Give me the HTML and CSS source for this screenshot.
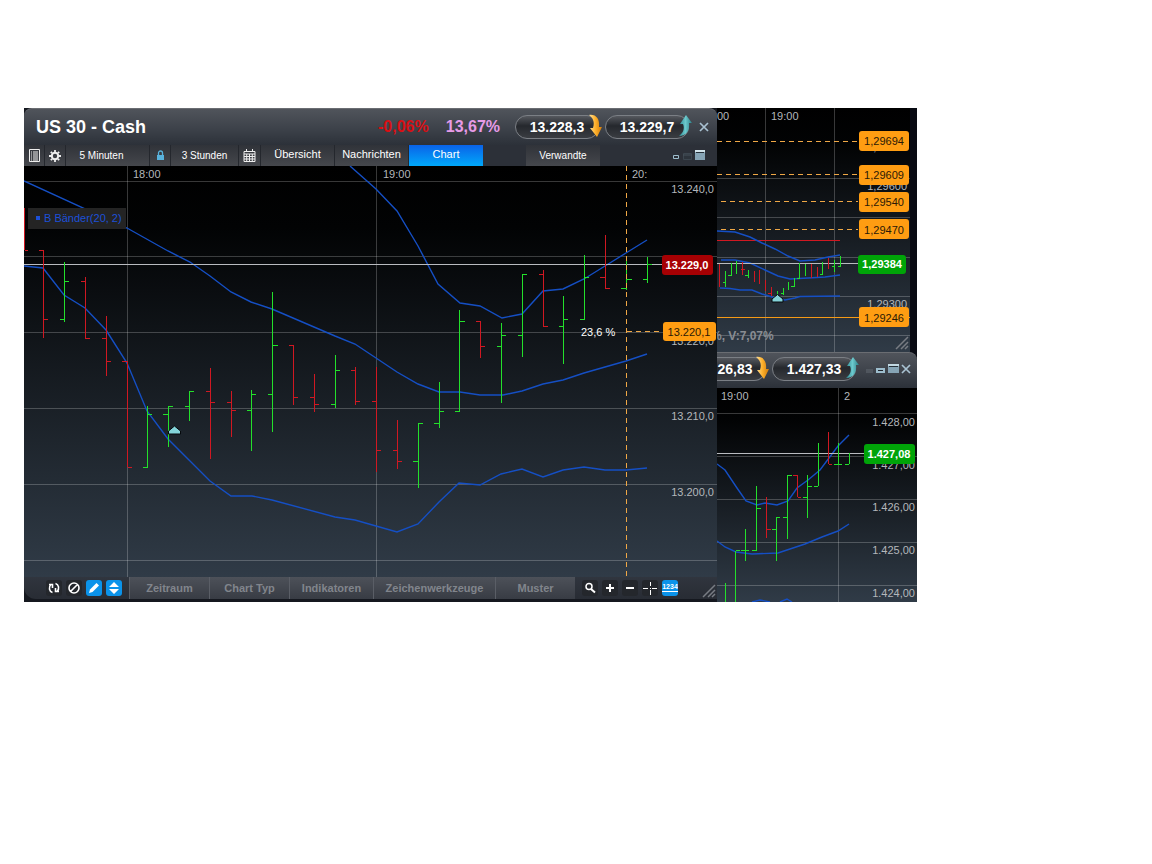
FILE: index.html
```html
<!DOCTYPE html>
<html lang="de">
<head>
<meta charset="utf-8">
<title>US 30 - Cash</title>
<link rel="stylesheet" href="styles.css">
</head>
<body>
<svg class="defs" width="0" height="0" aria-hidden="true">
  <defs>
    <linearGradient id="bg" x1="0" y1="0" x2="0" y2="1"><stop offset="0" stop-color="#000"/><stop offset=".15" stop-color="#020304"/><stop offset="1" stop-color="#303b47"/></linearGradient>
    <linearGradient id="gold" x1="0" y1="0" x2="1" y2="0"><stop offset="0" stop-color="#ffe29a"/><stop offset=".5" stop-color="#fdb02c"/><stop offset="1" stop-color="#d07a08"/></linearGradient>
    <linearGradient id="teal" x1="0" y1="0" x2="1" y2="0"><stop offset="0" stop-color="#2e8a92"/><stop offset=".5" stop-color="#6cc9cd"/><stop offset="1" stop-color="#2b7f88"/></linearGradient>
    <symbol id="down" viewBox="0 0 14 24"><path d="M1 1C8 0 12 5 11 13H14L9 23L2 14H5C7 8 5 4 1 1Z" fill="url(#gold)"/></symbol>
    <symbol id="up" viewBox="0 0 14 24"><path d="M1 22C8 22 12 17 11 9H14L8 1L2 10H5C7 15 5 19 1 22Z" fill="url(#teal)"/></symbol>
    <symbol id="close" viewBox="0 0 10 10"><path d="M1 1L9 9M9 1L1 9" stroke="#a9c2d2" stroke-width="1.7" fill="none"/></symbol>
    <symbol id="grip" viewBox="0 0 14 14"><path d="M1 13L13 1M6 13L13 6M10 13L13 10" stroke="#787c83" stroke-width="1.5" fill="none"/></symbol>
  </defs>
</svg>

<main class="workspace">
  <section class="window window-fx" aria-label="EUR/USD">
    <svg class="chart" viewBox="717 108 193 244">
      <rect x="717" y="108" width="193" height="244" fill="url(#bg)"/>
      <path class="grid" d="M717 178.5H910M717 217.5H910M717 257.5H910M717 296.5H910M717 335.5H910M765.5 108V352M834.5 108V352"/>
      <path class="level" d="M717 141.5H858M717 174.5H858M721 201.5H858M721 229.5H858"/>
      <path class="orange" d="M717 317.5H910"/>
      <path class="loss" d="M717 240.5H840"/>
      <path class="band" d="M717 231L735 232L750 237L762 243L775 249L788 256L800 261L815 260L828 257L840 255M721 260H735L750 263L765 270L778 276L790 279L808 278L825 277L840 275M720 288L730 288.500L740 290H752L762 294L772 297L785 300L795 298L800 296.500L840 296"/>
      <path class="price" d="M717 263.5H858"/>
      <path class="loss" d="M719.5 264V287M742.5 262V275M741 269.5h4M754.5 271V282M759.5 270V284M765.5 280V291M771.5 287V296M768 293.500h3M811.5 264V278M817.5 267V277M828.5 258V269"/>
      <path class="gain" d="M725.5 271V287M723 282.500h2M731.5 263V276M728 275.500h3M736.5 261V274M748.5 270V278M745 275.500h3M777.5 291V297M783.5 288V295M781 293.500h2M788.5 282V290M794.5 278V287M791 286.500h3M799.5 263V279M797 278.500h2M805.5 264V276M822.5 262V275M820 274.500h2M834.5 260V272M832 266.500h2M840.5 256V267M838 266.500h2"/>
      <path class="marker" d="M772 302V299L777.500 294.500L783 299V302Z"/>
      <g class="axis">
        <text x="717" y="120">00</text><text x="771" y="120">19:00</text>
        <text x="907" y="151" text-anchor="end">1,29700</text><text x="907" y="190" text-anchor="end">1,29600</text><text x="907" y="308" text-anchor="end">1,29300</text>
      </g>
      <text class="info" x="711" y="340">%, V:7,07%</text>
      <g class="tag">
        <rect x="859" y="131" width="50" height="20" rx="3"/><text x="884" y="145">1,29694</text>
        <rect x="859" y="165" width="50" height="20" rx="3"/><text x="884" y="179">1,29609</text>
        <rect x="859" y="192" width="50" height="20" rx="3"/><text x="884" y="206">1,29540</text>
        <rect x="859" y="219" width="50" height="20" rx="3"/><text x="884" y="234">1,29470</text>
        <rect x="859" y="307" width="50" height="20" rx="3"/><text x="884" y="322">1,29246</text>
      </g>
      <g class="tag tag-gain"><rect x="858" y="255" width="48" height="19" rx="3"/><text x="882" y="268">1,29384</text></g>
      <use href="#grip" x="895" y="336" width="14" height="14"/>
    </svg>
  </section>

  <section class="window window-gold" aria-label="Gold">
    <header class="titlebar titlebar-gold">
      <button class="quote quote-cut">26,83<svg class="arrow"><use href="#down"/></svg></button>
      <button class="quote">1.427,33<svg class="arrow"><use href="#up"/></svg></button>
      <button class="icon-button controls" aria-label="Fenstergröße"><svg width="33" height="12" viewBox="0 0 33 12"><path d="M0 6h7v4H0z" fill="#50565e"/><path d="M10 5h9v5h-9z" fill="#9dbdcd"/><path d="M12 7h5v1h-5z" fill="#20252b"/><path d="M22 1h11v9H22z" fill="#86a4b5"/><path d="M22 1h11v2H22z" fill="#c2d8e2"/><path d="M23 3h9v1h-9z" fill="#253039"/></svg></button>
      <button class="icon-button" aria-label="Schließen"><svg width="10" height="10"><use href="#close"/></svg></button>
    </header>
    <svg class="chart" viewBox="717 388 200 214">
      <rect x="717" y="388" width="200" height="214" fill="url(#bg)"/>
      <path class="grid" d="M717 413.5H917M717 456.5H917M717 499.5H917M717 542.5H917M717 585.5H917M838.5 388V602"/>
      <path class="band" d="M717 464L725 470L737 488L746 501L757 505L765 503L777 505L788 501L797 488L808 480L820 470L829 458L838 446L849 435M717 541L725 547L736 552L752 554L778 553L790 549L805 544L822 537L838 531L849 524M752 602L760 600L770 602M780 602L787 599L792 602"/>
      <path class="price" d="M717 453.5H864"/>
      <path class="loss" d="M766.5 497V538M767 529.5h4M797.5 475V497M793 475.5h4M798 497.5h3M828.5 432V464M829 464.5h3"/>
      <path class="gain" d="M725.5 583V602M735.5 551V602M736 550.5h4M745.5 529V561M741 550.5h8M756.5 486V551M752 550.5h4M757 508.5h4M776.5 517V561M772 529.5h4M777 517.5h3M787.5 475V539M783 517.5h4M788 475.5h4M807.5 475V518M803 497.5h4M808 486.5h4M818.5 443V486M814 486.5h4M838.5 443V464M834 464.5h8M849.5 453V464M845 464.5h4"/>
      <g class="axis">
        <text x="721" y="400">19:00</text><text x="844" y="400">2</text>
        <g text-anchor="end"><text x="915" y="426">1.428,00</text><text x="915" y="469">1.427,00</text><text x="915" y="511">1.426,00</text><text x="915" y="554">1.425,00</text><text x="915" y="597">1.424,00</text></g>
      </g>
      <g class="tag tag-gain"><rect x="864" y="444" width="51" height="20" rx="3"/><text x="889" y="458">1.427,08</text></g>
    </svg>
  </section>

  <section class="window window-us30" aria-label="US 30 - Cash">
    <header class="titlebar">
      <h1 class="title">US 30 - Cash</h1>
      <span class="change">-0,06%</span>
      <span class="margin">13,67%</span>
      <button class="quote">13.228,3<svg class="arrow"><use href="#down"/></svg></button>
      <button class="quote">13.229,7<svg class="arrow"><use href="#up"/></svg></button>
      <button class="icon-button" aria-label="Schließen"><svg width="10" height="10"><use href="#close"/></svg></button>
    </header>

    <nav class="toolbar">
      <button class="tool" aria-label="Liste"><svg width="11" height="13" viewBox="0 0 11 13"><path d="M.5.500h10v12H.5z" fill="none" stroke="#eee"/><path d="M2 3h1M4 3h5M2 5h1M4 5h5M2 7h1M4 7h5M2 9h1M4 9h5M2 11h1M4 11h5" stroke="#eee"/></svg></button>
      <button class="tool" aria-label="Einstellungen"><svg width="12" height="12" viewBox="0 0 12 12"><circle cx="6" cy="6" r="3.200" fill="none" stroke="#eee" stroke-width="2"/><path d="M6 0v2M6 10v2M0 6h2M10 6h2M1.800 1.800l1.400 1.400M8.800 8.800l1.400 1.400M10.200 1.800L8.800 3.200M3.200 8.800l-1.400 1.400" stroke="#eee" stroke-width="1.800"/></svg></button>
      <button class="tool tool-interval">5 Minuten</button>
      <button class="tool" aria-label="Sperren"><svg width="9" height="11" viewBox="0 0 9 11"><path d="M2.500 5V3a2 2 0 0 1 4 0v2" fill="none" stroke="#58b2dc" stroke-width="1.300"/><path d="M1 5h7v5H1z" fill="#58b2dc"/></svg></button>
      <button class="tool tool-range">3 Stunden</button>
      <button class="tool tool-calendar" aria-label="Kalender"><svg width="13" height="13" viewBox="0 0 13 13"><path d="M1 2.500h11v10H1zM1 5h11M1 7.500h11M1 10h11M3.700 5v7M6.500 5v7M9.300 5v7M3.500 0v3M9.500 0v3" fill="none" stroke="#eee"/></svg></button>
      <button class="tool tab">Übersicht</button>
      <button class="tool tab">Nachrichten</button>
      <button class="tool tab tab-active">Chart</button>
      <button class="tool related">Verwandte</button>
      <button class="sizes" aria-label="Fenstergröße"><svg width="33" height="12" viewBox="0 0 33 12"><path d="M1.500 5.500h5v3h-5z" fill="none" stroke="#9dbdcd"/><path d="M11.500 3.500h8v6h-8z" fill="#2d343c" stroke="#3c464f"/><path d="M11 5h9" stroke="#46515b"/><path d="M23 1h10v9H23z" fill="#86a4b5"/><path d="M23 0h10v2H23z" fill="#d2e3ea"/><path d="M24 2h8v1h-8z" fill="#253039"/></svg></button>
    </nav>

    <svg class="chart" viewBox="24 166 693 411">
      <rect x="24" y="166" width="693" height="411" fill="url(#bg)"/>
      <path class="grid" d="M24 181.5H717M24 256.5H717M24 332.5H717M24 408.5H717M24 484.5H717M24 560.5H717M127.5 166V577M376.5 166V577"/>
      <path class="band" d="M24 181L127 228L168 251L190 262L210 276L231 292L251 302L272 309L314 327L335 336L355 344L376 358L397 372L418 384L439 392L460 392L480 395L503 395L522 391L543 384L563 380L584 373L605 367L626 361L647 354M24 266L43 268L64 295L85 308L106 330L127 363L147 411L168 439L210 481L231 496H252L272 500L335 517L355 520L376 526L397 532L418 524L439 502L459 483L480 485L501 474L522 469L543 477L563 470L584 467L605 470H626L647 468M350 166L376 189L397 211L418 246L438 284L460 303L480 306L502 318L522 314L543 291L563 289L584 279L605 266L626 253L647 240"/>
      <path class="price" d="M24 264.5H662"/>
      <path class="loss" d="M24.500 208V250M25 250.5h3M43.5 250V338M39 250.5h4M44 319.5h4M85.5 277V339M81 281.5h4M86 338.5h4M106.5 316V376M102 338.5h4M107 361.5h4M127.5 361V467M122 361.5h5M128 467.5h4M210.5 368V459M206 391.5h4M211 402.5h4M231.5 391V437M227 402.5h4M232 410.5h4M293.5 345V405M289 345.5h4M294 397.5h4M314.5 374V412M310 397.5h4M315 404.5h4M355.5 367V405M351 370.5h4M356 401.5h4M376.5 367V472M372 401.5h4M377 450.5h4M397.5 420V469M393 450.5h4M398 461.5h4M480.5 321V358M476 321.5h4M481 346.5h4M543.5 270V327M539 274.5h4M544 326.5h4M605.5 235V289M600 277.5h5M606 288.5h4"/>
      <path class="gain" d="M64.5 262V322M60 319.5h4M65 281.5h4M147.5 406V467M143 467.5h5M148 414.5h4M168.5 406V447M163 414.5h5M169 406.5h4M189.5 391V421M185 406.5h4M190 391.5h4M251.5 390V451M247 410.5h4M252 394.5h4M272.5 292V432M268 394.5h4M273 345.5h5M335.5 355V408M331 404.5h4M336 370.5h4M418.5 423V488M413 461.5h5M419 423.5h4M439.5 382V428M434 423.5h5M440 411.5h4M459.5 310V412M455 411.5h4M460 321.5h5M501.5 323V403M497 346.5h4M502 335.5h4M522.5 274V357M518 335.5h4M523 274.5h4M563.5 296V364M559 326.5h4M564 319.5h4M584.5 255V320M580 319.5h4M585 277.5h4M626.5 256V290M621 288.5h5M627 279.5h5M647.5 257V283M643 279.5h4M648 264.5h4"/>
      <path class="level" d="M626.5 166V577M627 331.5H662"/>
      <path class="marker" d="M168.500 434V431L174.500 426L180.500 431V434Z"/>
      <g class="axis">
        <text x="133" y="178">18:00</text><text x="383" y="178">19:00</text><text x="632" y="178">20:</text>
        <g text-anchor="end"><text x="714" y="193">13.240,0</text><text x="714" y="345">13.220,0</text><text x="714" y="420">13.210,0</text><text x="714" y="496">13.200,0</text></g>
        <text class="ratio" x="581" y="336">23,6 %</text>
      </g>
      <rect x="28" y="208" width="98" height="21" fill="#242424"/><rect x="36" y="216" width="4" height="4" fill="#1c50d8"/>
      <text class="legend" x="44" y="222">B Bänder(20, 2)</text>
      <g class="tag"><rect x="663" y="322" width="53" height="19" rx="3"/><text x="689" y="336">13.220,1</text></g>
      <g class="tag tag-loss"><rect x="662" y="255" width="51" height="20" rx="3"/><text x="687" y="269">13.229,0</text></g>
    </svg>

    <footer class="footer">
      <div class="footer-tools">
        <button class="mini" aria-label="Aktualisieren"><svg viewBox="0 0 16 16"><path d="M6.500 12.500A4 4.500 0 0 1 5 4.500M9.500 3.500A4 4.500 0 0 1 11 11.500M3 4.500h3.500V8M13 11.500H9.500V8" fill="none" stroke="#fff" stroke-width="1.600"/></svg></button>
        <button class="mini" aria-label="Zurücksetzen"><svg viewBox="0 0 16 16"><path d="M4.500 11.500L11.500 4.500M13 8A5 5 0 1 1 3 8A5 5 0 1 1 13 8" fill="none" stroke="#fff" stroke-width="1.600"/></svg></button>
        <button class="mini mini-on" aria-label="Zeichnen"><svg viewBox="0 0 16 16"><path d="M3 13L4 9.500L10.500 3L13 5.500L6.500 12Z" fill="#fff"/></svg></button>
        <button class="mini mini-on" aria-label="Skalieren"><svg viewBox="0 0 16 16"><path d="M3 7L8 2L13 7ZM3 9H13L8 14Z" fill="#fff"/></svg></button>
      </div>
      <div class="footer-tabs">
        <button class="footer-tab">Zeitraum</button><button class="footer-tab">Chart Typ</button><button class="footer-tab footer-tab-medium">Indikatoren</button><button class="footer-tab footer-tab-wide">Zeichenwerkzeuge</button><button class="footer-tab">Muster</button>
      </div>
      <div class="footer-zoom">
        <button class="mini" aria-label="Lupe"><svg viewBox="0 0 16 16"><circle cx="7" cy="6.500" r="3" fill="none" stroke="#fff" stroke-width="1.500"/><path d="M9 9L13 12.500" stroke="#fff" stroke-width="2"/></svg></button>
        <button class="mini" aria-label="Vergrößern"><svg viewBox="0 0 16 16"><path d="M4 8H12M8 4V12" stroke="#fff" stroke-width="2"/></svg></button>
        <button class="mini" aria-label="Verkleinern"><svg viewBox="0 0 16 16"><path d="M4 8H12" stroke="#fff" stroke-width="2"/></svg></button>
        <button class="mini" aria-label="Fadenkreuz"><svg viewBox="0 0 16 16"><path d="M1 8.500H6M10 8.500H15M8.500 2V6M8.500 10V15M8 8.500h1" stroke="#fff"/></svg></button>
        <button class="mini mini-on" aria-label="Werte anzeigen"><svg viewBox="0 0 16 16"><text class="digits" x="8" y="9">1234</text><path d="M0 11.500H16" stroke="#fff"/></svg></button>
      </div>
      <svg class="grip" width="14" height="14"><use href="#grip"/></svg>
    </footer>
  </section>
</main>
</body>
</html>
```

FILE: styles.css
```css
body {
  margin: 0;
  background: #fff;
  font-family: "Liberation Sans", Arial, sans-serif;
}

button {
  margin: 0;
  padding: 0;
  border: 0;
  background: none;
  color: inherit;
  font: inherit;
}

.defs { position: absolute; }

.workspace {
  position: relative;
  width: 893px;
  height: 494px;
  margin: 108px 0 0 24px;
  background: #080a12;
}

.window { position: absolute; }
.window-us30 { left: 0; top: 0; width: 693px; padding-bottom: 3px; background: #15181f; }
.window-fx { left: 693px; top: 0; width: 193px; }
.window-gold { left: 693px; top: 244px; width: 200px; }

.chart { display: block; width: 100%; height: auto; }

.titlebar {
  display: flex;
  align-items: center;
  box-sizing: border-box;
  height: 37px;
  padding: 0 8px 0 12px;
  border-top: 1px solid #6a6d72;
  border-radius: 8px 8px 0 0;
  background: linear-gradient(#50545b, #3b4048 60%, #2c3139);
  color: #fff;
}
.titlebar-gold { height: 36px; padding: 0 6px 3px 0; border-radius: 0 8px 0 0; }

.title { flex: 1; margin: 0; font-size: 18px; font-weight: bold; }
.change { margin-right: 17px; color: #d80f14; font-size: 16px; font-weight: bold; }
.margin { margin-right: 15px; color: #e79be8; font-size: 16px; font-weight: bold; }

.quote {
  position: relative;
  box-sizing: border-box;
  width: 84px;
  height: 24px;
  margin-right: 6px;
  border: 1px solid #7b7f85;
  border-radius: 12px;
  background: linear-gradient(#55585e, #25282d 45%, #3a3d42);
  font-size: 14px;
  font-weight: bold;
}
.quote + .quote { margin-right: 10px; }
.quote-cut {
  width: 49px;
  padding-right: 12px;
  border-left: 0;
  border-radius: 0 12px 12px 0;
}
.arrow { position: absolute; right: -4px; top: -2px; width: 14px; height: 24px; }
.icon-button { display: flex; }
.titlebar > .icon-button:last-child { margin-left: auto; }

.toolbar {
  display: flex;
  height: 21px;
  background: #2c3038;
  color: #fff;
  font-size: 10px;
}
.tool {
  display: flex;
  align-items: center;
  justify-content: center;
  box-sizing: border-box;
  width: 21px;
  border-right: 1px solid #24272d;
  background: linear-gradient(#303339, #45474c);
}
.tool-interval { width: 84px; padding-right: 12px; }
.tool-range { width: 68px; }
.tool-calendar { width: 22px; }
.tab { width: 74px; padding-bottom: 3px; font-size: 11px; }
.tab-active { border: 0; background: linear-gradient(#0a63e8, #00a8fa); }
.related { width: 74px; margin-left: 43px; border: 0; }
.sizes { display: flex; align-items: center; margin: 0 12px 0 auto; }

.grid { fill: none; stroke: #fff; stroke-opacity: .22; }
.band { fill: none; stroke: #154fc4; stroke-width: 1.4; }
.price { stroke: #b9bbc0; }
.loss { fill: none; stroke: #d01822; }
.gain { fill: none; stroke: #23e02b; }
.level { fill: none; stroke: #f0a846; stroke-dasharray: 5 4; }
.orange { stroke: #f59a16; }
.marker { fill: #84d4da; stroke: #05090c; }

.axis { fill: #b4b7bb; font-size: 11px; }
.ratio { fill: #fff; }
.legend { fill: #1c50d8; font-size: 11px; }
.info { fill: #898d93; font-size: 12px; font-weight: bold; }
.tag { fill: #ff9d12; font-size: 11px; text-anchor: middle; }
.tag text { fill: #2b1906; }
.tag-gain { fill: #00a408; font-weight: bold; }
.tag-loss { fill: #a60003; font-weight: bold; }
.tag-gain text, .tag-loss text { fill: #fff; }

.footer {
  display: flex;
  align-items: stretch;
  height: 22px;
  border-radius: 0 0 0 12px;
  background: linear-gradient(#30353e, #282c34);
}
.footer-tools, .footer-zoom { display: flex; align-items: center; gap: 4px; }
.footer-tools { padding: 0 7px 0 22px; }
.footer-zoom { padding-left: 7px; }
.footer-tabs { display: flex; }
.footer-tab {
  box-sizing: border-box;
  width: 80px;
  border-left: 1px solid #5a5e66;
  background: linear-gradient(#4d5159, #383c44);
  color: #81858c;
  font-size: 11px;
  font-weight: bold;
}
.footer-tab-medium { width: 84px; }
.footer-tab-wide { width: 122px; }
.mini { display: flex; width: 16px; height: 16px; border-radius: 3px; background: #24272c; }
.mini-on { background: #0b93ea; }
.digits { fill: #fff; font-size: 7px; font-weight: bold; text-anchor: middle; }
.grip { margin: auto 1px 1px auto; }
```
